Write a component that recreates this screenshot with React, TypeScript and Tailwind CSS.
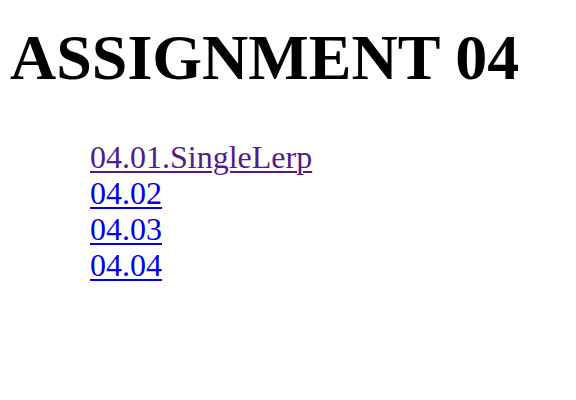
import React from 'react';

const links = [
  { label: '04.01.SingleLerp', visited: true },
  { label: '04.02', visited: false },
  { label: '04.03', visited: false },
  { label: '04.04', visited: false },
];

export default function App() {
  return (
    <div className="min-h-[400px] bg-white pl-[10px] pt-[21px] font-['Liberation_Serif','Times_New_Roman',serif] text-black">
      <h1 className="text-[64px] font-bold leading-[74px]">ASSIGNMENT 04</h1>
      <ul className="mt-[44px] pl-[80px]">
        {links.map((l) => (
          <li key={l.label} className="text-[32px] leading-[36px]">
            <a
              href="#"
              className={
                l.visited
                  ? 'text-[#551A8B] underline decoration-2 underline-offset-[3px]'
                  : 'text-[#0000EE] underline decoration-2 underline-offset-[3px]'
              }
            >
              {l.label}
            </a>
          </li>
        ))}
      </ul>
    </div>
  );
}
